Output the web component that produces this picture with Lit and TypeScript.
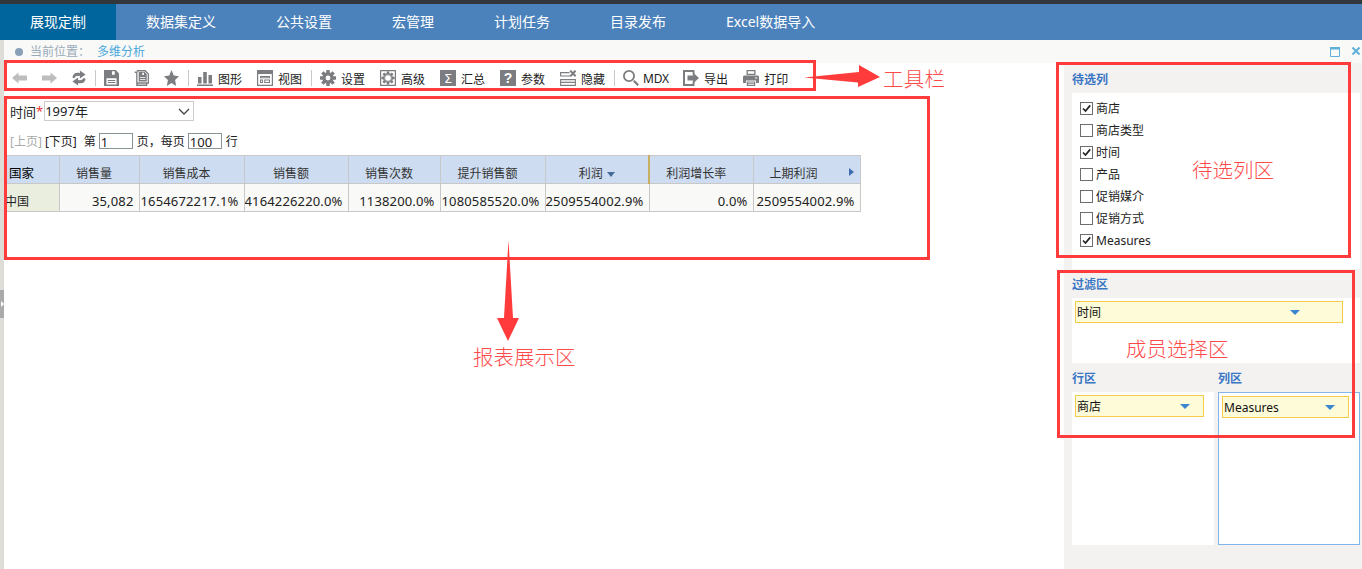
import { LitElement, css, html, svg, nothing } from "lit";
import { customElement } from "lit/decorators.js";

const NAV = ["展现定制", "数据集定义", "公共设置", "宏管理", "计划任务", "目录发布", "Excel数据导入"];
const COLS = [
  { t: "国家", w: 54 },
  { t: "销售量", w: 80 },
  { t: "销售成本", w: 105 },
  { t: "销售额", w: 104 },
  { t: "销售次数", w: 92 },
  { t: "提升销售额", w: 105 },
  { t: "利润", w: 104 },
  { t: "利润增长率", w: 104 },
  { t: "上期利润", w: 107 },
];
const ROW = ["中国", "35,082", "1654672217.1%", "4164226220.0%", "1138200.0%", "1080585520.0%", "2509554002.9%", "0.0%", "2509554002.9%"];
const FIELDS: [string, boolean][] = [
  ["商店", true],
  ["商店类型", false],
  ["时间", true],
  ["产品", false],
  ["促销媒介", false],
  ["促销方式", false],
  ["Measures", true],
];

const gearTeeth = (r: number, w: number, h = 3.4) =>
  [0, 45, 90, 135, 180, 225, 270, 315].map(
    (a) => svg`<rect x=${8 - w / 2} y=${8 - r} width=${w} height=${h} transform="rotate(${a} 8 8)"/>`
  );

const ICONS = {
  back: svg`<path d="M0 7 6.5 1.5V4.5H15V9.5H6.5V12.5Z"/>`,
  forward: svg`<path d="M15 7 8.5 1.5V4.5H0V9.5H8.5V12.5Z"/>`,
  refresh: svg`<path d="M.5 7.5C1 3.5 4.5 2 9 3.2V.5L15.5 4.4 9 8.6V6C6 5.4 3.5 6 2.6 8.4Z"/><path d="M15.5 9C15 12.6 11.5 14 7 13V15.6L.5 11.6 7 7.6V10C10 10.6 12.5 10 13.4 7.8Z"/>`,
  save: svg`<path fill-rule="evenodd" d="M0 0H12.5L16 3.5V16H0ZM8.5 1.2V4.8H11.5V1.2ZM2.6 8.2V14.4H13.4V8.2Z"/><path d="M4 10H12V11H4ZM4 12H12V13H4Z"/>`,
  saveas: svg`<path fill="none" stroke="currentColor" stroke-width="1.4" d="M.7 2.2H3V15.3H13.5V13M3 .7H12L15.3 4V13H3"/><path fill-rule="evenodd" d="M5 2H11.4L13.6 4.2V11.6H5ZM8.8 2.8V5H10.6V2.8ZM6.4 7V7.8H12.2V7ZM6.4 9V9.8H12.2V9Z"/>`,
  star: svg`<path d="M8 0 10.4 5.6 16 6.2 11.8 10 13 16 8 12.9 3 16 4.2 10 0 6.2 5.6 5.6Z"/>`,
  chart: svg`<path d="M1 7H4.5V13.6H1ZM6.2 2H9.8V13.6H6.2ZM11.5 5H15V13.6H11.5ZM0 14.6H16V16H0Z"/>`,
  view: svg`<path fill-rule="evenodd" d="M0 0H16V16H0ZM1.2 4V14.8H14.8V4ZM3 6H13V8.2H3ZM3 9.5H6V13H3ZM7.2 9.5H13V13H7.2ZM4 10.5V12H5V10.5ZM8.2 10.5V12H12V10.5ZM4 7V7.2H12V7Z"/>`,
  gear: svg`${gearTeeth(8, 3.4)}<path fill-rule="evenodd" d="M8 2.2A5.8 5.8 0 1 1 8 13.8 5.8 5.8 0 1 1 8 2.2ZM8 5.6A2.4 2.4 0 1 0 8 10.4 2.4 2.4 0 1 0 8 5.6Z"/>`,
  gear2: svg`<path fill-rule="evenodd" d="M0 0H16V16H0ZM1.2 1.2V14.8H14.8V1.2Z"/>${gearTeeth(6.6, 2.6, 2.6)}<path fill-rule="evenodd" d="M8 2.9A5.1 5.1 0 1 1 8 13.1 5.1 5.1 0 1 1 8 2.9ZM8 5.2A2.8 2.8 0 1 0 8 10.8 2.8 2.8 0 1 0 8 5.2Z" opacity=".8"/>`,
  sigma: svg`<rect width="16" height="16"/><text x="8" y="13" text-anchor="middle" fill="#fff" font-size="13" font-family="DejaVu Sans">Σ</text>`,
  help: svg`<rect width="16" height="16"/><text x="8" y="13.2" text-anchor="middle" fill="#fff" font-size="14" font-weight="700" font-family="Liberation Sans">?</text>`,
  hide: svg`<path fill="none" stroke="currentColor" stroke-width="1.1" d="M9.5 2.6H.6V6H10M.6 9.6H15.4V15.4H.6ZM.6 12.4H15.4"/><path fill="none" stroke="currentColor" stroke-width="2" d="M10.2 .6 15.6 6.4M15.6 .6 10.2 6.4"/>`,
  search: svg`<path fill-rule="evenodd" d="M6 0A6 6 0 1 1 6 12 6 6 0 1 1 6 0ZM6 1.8A4.2 4.2 0 1 0 6 10.2 4.2 4.2 0 1 0 6 1.8Z"/><path d="M10 11.6 11.6 10 16 14.4 14.4 16Z"/>`,
  exportDoc: svg`<path d="M0 0H11.5V4.5H9.6V2H2V14H9.6V11.5H11.5V16H0Z"/><path d="M4.5 5.5H10V2.6L16 8 10 13.4V10.5H4.5Z"/>`,
  print: svg`<path fill-rule="evenodd" d="M3.5 0H12.5V5H3.5ZM4.8 1.2V3.8H11.2V1.2Z"/><path fill-rule="evenodd" d="M1.5 5.6H14.5Q16 5.6 16 7V12.6Q16 13 15.5 13H13V10.5H3V13H.5Q0 13 0 12.6V7Q0 5.6 1.5 5.6ZM12 7.4V8.6H14.2V7.4Z"/><path fill-rule="evenodd" d="M3.8 11.4H12.2V16H3.8ZM5 12.6V13.3H11V12.6ZM5 14.2V14.9H11V14.2Z"/>`,
};

type IconName = keyof typeof ICONS;
type ToolItem = { icon?: IconName; w?: number; label?: string; off?: boolean; sep?: boolean };

const TOOLS: ToolItem[] = [
  { icon: "back", w: 15, off: true },
  { icon: "forward", w: 15, off: true },
  { icon: "refresh", w: 14 },
  { sep: true },
  { icon: "save", w: 15 },
  { icon: "saveas", w: 15 },
  { icon: "star", w: 15 },
  { sep: true },
  { icon: "chart", label: "图形" },
  { icon: "view", label: "视图" },
  { sep: true },
  { icon: "gear", label: "设置" },
  { icon: "gear2", label: "高级" },
  { icon: "sigma", label: "汇总" },
  { icon: "help", label: "参数" },
  { icon: "hide", label: "隐藏" },
  { sep: true },
  { icon: "search", label: "MDX" },
  { icon: "exportDoc", label: "导出" },
  { icon: "print", label: "打印" },
];

@customElement("app-root")
export class AppRoot extends LitElement {
  static styles = css`
    :host {
      display: block;
      position: relative;
      width: 1362px;
      height: 569px;
      overflow: hidden;
      background: #fff;
      color: #222;
      font: 12px "Noto Sans", "Noto Sans CJK SC", sans-serif;
    }
    .shell {
      display: flex;
      flex-direction: column;
      height: 100%;
    }
    .topline {
      height: 4px;
      background: #33363a;
    }
    .nav {
      display: flex;
      height: 36px;
      background: #4c82bb;
      color: #fff;
      font-size: 14px;
      line-height: 36px;
    }
    .nav div {
      padding: 0 30px;
    }
    .nav .active {
      background: #00659c;
    }
    .frame {
      flex: 1;
      display: flex;
      min-height: 0;
    }
    .strip {
      width: 4px;
      background: #dedcd7;
    }
    .page {
      flex: 1;
      display: flex;
      flex-direction: column;
      min-width: 0;
    }
    .crumb {
      height: 23px;
      display: flex;
      align-items: center;
      background: #f9f9f7;
      color: #9aabb8;
      line-height: 23px;
    }
    .dot {
      width: 8px;
      height: 8px;
      border-radius: 50%;
      background: #8a9fb8;
      margin: 0 7px 0 11px;
    }
    .crumb a {
      color: #4aa8dc;
      margin-left: 7px;
    }
    .win {
      margin-left: auto;
      display: flex;
      gap: 12px;
      margin-right: 2px;
      color: #5fb0d8;
    }
    .content {
      flex: 1;
      display: flex;
      min-height: 0;
    }
    .main {
      width: 1060px;
      flex: none;
    }
    .toolbar {
      display: flex;
      align-items: center;
      gap: 15px;
      height: 30px;
      padding-left: 8px;
      color: #7b7d80;
    }
    .tool {
      display: flex;
      align-items: center;
      gap: 5px;
    }
    .tool svg {
      fill: currentColor;
      display: block;
    }
    .tool.off {
      color: #bdbdbd;
    }
    .tool span {
      color: #222;
      white-space: nowrap;
      padding-top: 1px;
    }
    .tool .latin {
      width: 25px;
      margin-left: -1px;
      letter-spacing: -0.2px;
    }
    .sep {
      width: 1px;
      height: 16px;
      background: #c8c8c8;
      margin: 0 -7px 0 -6px;
    }
    .report {
      padding: 8px 2px 0;
      font-size: 13px;
    }
    .param {
      display: flex;
      align-items: center;
      height: 20px;
      padding-left: 4px;
    }
    .param b {
      color: #e33;
      font-weight: 400;
      margin-right: 1px;
    }
    .select {
      width: 148px;
      height: 18px;
      border: 1px solid #ccc;
      display: flex;
      align-items: center;
      justify-content: space-between;
      line-height: 18px;
      font-size: 13px;
    }
    .select svg {
      margin-right: 3px;
    }
    .pager {
      display: flex;
      align-items: center;
      height: 16px;
      margin-top: 12px;
      padding-left: 4px;
      font-size: 12px;
    }
    .pager .dim {
      color: #aaa;
      margin-right: 3px;
    }
    .pager .next {
      margin-right: 7px;
    }
    .pager input {
      box-sizing: border-box;
      height: 16px;
      width: 34px;
      border: 1px solid #8a9696;
      padding: 2px 0 0 1px;
      margin: 0 4px 0 3px;
      font: 13px "Noto Sans", sans-serif;
      color: #222;
      background: #fff;
      outline: none;
    }
    table {
      border-collapse: collapse;
      table-layout: fixed;
      width: 855px;
      margin: 6px 0 0 -1px;
    }
    th,
    td {
      border: 1px solid #c8c8c8;
      height: 28px;
      padding: 6px 0 0;
      box-sizing: border-box;
    }
    th:first-child,
    td:first-child {
      border-left: 0;
    }
    th {
      background: #cddcf0;
      font-weight: 400;
      font-size: 12px;
      color: #333;
      text-align: center;
      padding-right: 10px;
      position: relative;
    }
    th:first-child {
      text-align: left;
      padding: 6px 0 0 4px;
      color: #000;
      font-size: 12.5px;
    }
    th.sorted {
      border-right: 2px solid #c8ad62;
      padding-right: 0;
    }
    th.last {
      padding-right: 26px;
    }
    .sort {
      display: inline-block;
      margin-left: 4px;
      vertical-align: 1px;
      border: 4px solid transparent;
      border-top: 5px solid #44699a;
      border-bottom: 0;
    }
    .more {
      position: absolute;
      right: 6px;
      top: 12px;
      border: 4px solid transparent;
      border-left: 5px solid #3f6fb0;
      border-right: 0;
    }
    td {
      background: #f9f9f7;
      text-align: right;
      padding-right: 5px;
      font-size: 13px;
      letter-spacing: 0.15px;
      color: #222;
      white-space: nowrap;
      overflow: hidden;
    }
    td:first-child {
      background: #e9eedf;
      text-align: left;
      padding: 6px 0 0;
      font-size: 12px;
      letter-spacing: 0;
    }
    .side {
      flex: 1;
      background: #f3f2f0;
      padding: 0 2px 0 8px;
      min-width: 0;
    }
    .title {
      height: 29px;
      line-height: 32px;
      color: #3a76c4;
      font-weight: 700;
      font-size: 12px;
    }
    .title.first {
      height: 30px;
      line-height: 33px;
    }
    .panel {
      background: #fff;
    }
    .fields {
      height: 176px;
      box-sizing: border-box;
      padding: 4px 0 0 8px;
    }
    .field {
      display: flex;
      align-items: center;
      gap: 3px;
      height: 22px;
    }
    .check {
      box-sizing: border-box;
      width: 13px;
      height: 13px;
      border: 1px solid #6d6d6d;
      background: #fff;
      display: block;
    }
    .filter {
      height: 65px;
      box-sizing: border-box;
      padding: 3px;
    }
    .pill {
      display: flex;
      align-items: center;
      justify-content: space-between;
      box-sizing: border-box;
      height: 22px;
      border: 1px solid #f5cb4d;
      background: #fdfbd8;
      color: #111;
      padding: 0 13px 0 1px;
      font-size: 12px;
    }
    .pill i {
      border: 5px solid transparent;
      border-top: 5px solid #3a86cf;
      border-bottom: 0;
    }
    .filter .pill {
      width: 268px;
      padding-right: 42px;
    }
    .lower {
      display: grid;
      grid-template-columns: 142px 142px;
      gap: 0 4px;
    }
    .lower .title {
      line-height: 31px;
    }
    .zone {
      height: 153px;
      box-sizing: border-box;
      padding: 3px;
    }
    .zone .pill {
      width: 129px;
    }
    .zone.sel {
      border: 1px solid #80b6ea;
    }
    .zone.sel .pill {
      width: 127px;
    }
    /* callouts painted over the screenshot */
    .handle {
      position: absolute;
      left: 0;
      top: 290px;
      width: 4px;
      height: 28px;
      background: #aaa;
    }
    .handle::after {
      content: "";
      position: absolute;
      left: 1px;
      top: 11px;
      border: 3px solid transparent;
      border-left: 3px solid #fff;
      border-right: 0;
    }
    .box {
      position: absolute;
      box-sizing: border-box;
      border: 3px solid #ff3b3b;
      pointer-events: none;
    }
    .note {
      position: absolute;
      color: #ff4a4a;
      font-size: 20.5px;
      line-height: 24px;
      font-weight: 300;
      white-space: nowrap;
    }
    .arrows {
      position: absolute;
      inset: 0;
      pointer-events: none;
    }
  `;

  private renderTool(t: ToolItem) {
    if (t.sep) return html`<div class="sep"></div>`;
    return html`<div class="tool ${t.off ? "off" : ""}">
      ${t.icon === "back" || t.icon === "forward"
        ? html`<svg width="15" height="14" viewBox="0 0 15 14">${ICONS[t.icon]}</svg>`
        : html`<svg width=${t.w ?? 16} height="16" viewBox="0 0 16 16" preserveAspectRatio="none">${ICONS[t.icon!]}</svg>`}
      ${t.label ? html`<span class=${t.label === "MDX" ? "latin" : ""}>${t.label}</span>` : nothing}
    </div>`;
  }

  private renderCheck(on: boolean) {
    return html`<svg class="check" viewBox="0 0 11 11">
      ${on ? svg`<path d="M2 5.5 4.5 8 9.2 2.4" fill="none" stroke="#222" stroke-width="1.7"/>` : nothing}
    </svg>`;
  }

  render() {
    return html`
      <div class="shell">
        <div class="topline"></div>
        <div class="nav">
          ${NAV.map((n, i) => html`<div class=${i === 0 ? "active" : ""}>${n}</div>`)}
        </div>
        <div class="frame">
          <div class="strip"></div>
          <div class="page">
            <div class="crumb">
              <span class="dot"></span>当前位置：<a>多维分析</a>
              <div class="win">
                <svg width="10" height="10" viewBox="0 0 10 10">
                  <path fill="none" stroke="currentColor" d="M.5 1.5H9.5V9.5H.5Z" />
                  <path fill="currentColor" d="M0 0H10V2.5H0Z" />
                </svg>
                <svg width="8" height="8" viewBox="0 0 8 8">
                  <path stroke="currentColor" stroke-width="2" d="M.5 .5 7.5 7.5M7.5 .5 .5 7.5" />
                </svg>
              </div>
            </div>
            <div class="content">
              <div class="main">
                <div class="toolbar">${TOOLS.map((t) => this.renderTool(t))}</div>
                <div class="report">
                  <div class="param">
                    时间<b>*</b>
                    <div class="select">
                      1997年
                      <svg width="12" height="7" viewBox="0 0 12 7">
                        <path d="M1 1 6 6 11 1" fill="none" stroke="#444" stroke-width="1.3" />
                      </svg>
                    </div>
                  </div>
                  <div class="pager">
                    <span class="dim">[上页]</span><span class="next">[下页]</span>第
                    <input value="1" />页，每页<input value="100" />行
                  </div>
                  <table>
                    <colgroup>${COLS.map((c) => html`<col width=${c.w} />`)}</colgroup>
                    <tr>
                      ${COLS.map(
                        (c, i) => html`<th class=${i === 6 ? "sorted" : i === 8 ? "last" : ""}>
                          ${c.t}${i === 6 ? html`<span class="sort"></span>` : nothing}
                          ${i === 8 ? html`<span class="more"></span>` : nothing}
                        </th>`
                      )}
                    </tr>
                    <tr>
                      ${ROW.map((v) => html`<td>${v}</td>`)}
                    </tr>
                  </table>
                </div>
              </div>
              <div class="side">
                <div class="title first">待选列</div>
                <div class="panel fields">
                  ${FIELDS.map(
                    ([name, on]) => html`<div class="field">${this.renderCheck(on)}<span>${name}</span></div>`
                  )}
                </div>
                <div class="title">过滤区</div>
                <div class="panel filter">
                  <div class="pill">时间<i></i></div>
                </div>
                <div class="lower">
                  <div>
                    <div class="title">行区</div>
                    <div class="panel zone">
                      <div class="pill">商店<i></i></div>
                    </div>
                  </div>
                  <div>
                    <div class="title">列区</div>
                    <div class="panel zone sel">
                      <div class="pill">Measures<i></i></div>
                    </div>
                  </div>
                </div>
              </div>
            </div>
          </div>
        </div>
      </div>

      <div class="handle"></div>
      <div class="box" style="left:4px;top:60px;width:812px;height:31px"></div>
      <div class="box" style="left:4px;top:96px;width:926px;height:164px"></div>
      <div class="box" style="left:1056px;top:62px;width:295px;height:196px"></div>
      <div class="box" style="left:1057px;top:270px;width:298px;height:168px"></div>
      <svg class="arrows" width="1362" height="569" viewBox="0 0 1362 569">
        <path fill="#ff3b3b" d="M804 77.5 859 72V65L880 77 858 87V82.5Z" />
        <path fill="#ff3b3b" d="M508.5 240 513 318H519L508 341 497 318H504Z" />
      </svg>
      <div class="note" style="left:883px;top:67px;letter-spacing:.3px">工具栏</div>
      <div class="note" style="left:1192px;top:158px">待选列区</div>
      <div class="note" style="left:1126px;top:337px">成员选择区</div>
      <div class="note" style="left:473px;top:345px">报表展示区</div>
    `;
  }
}
